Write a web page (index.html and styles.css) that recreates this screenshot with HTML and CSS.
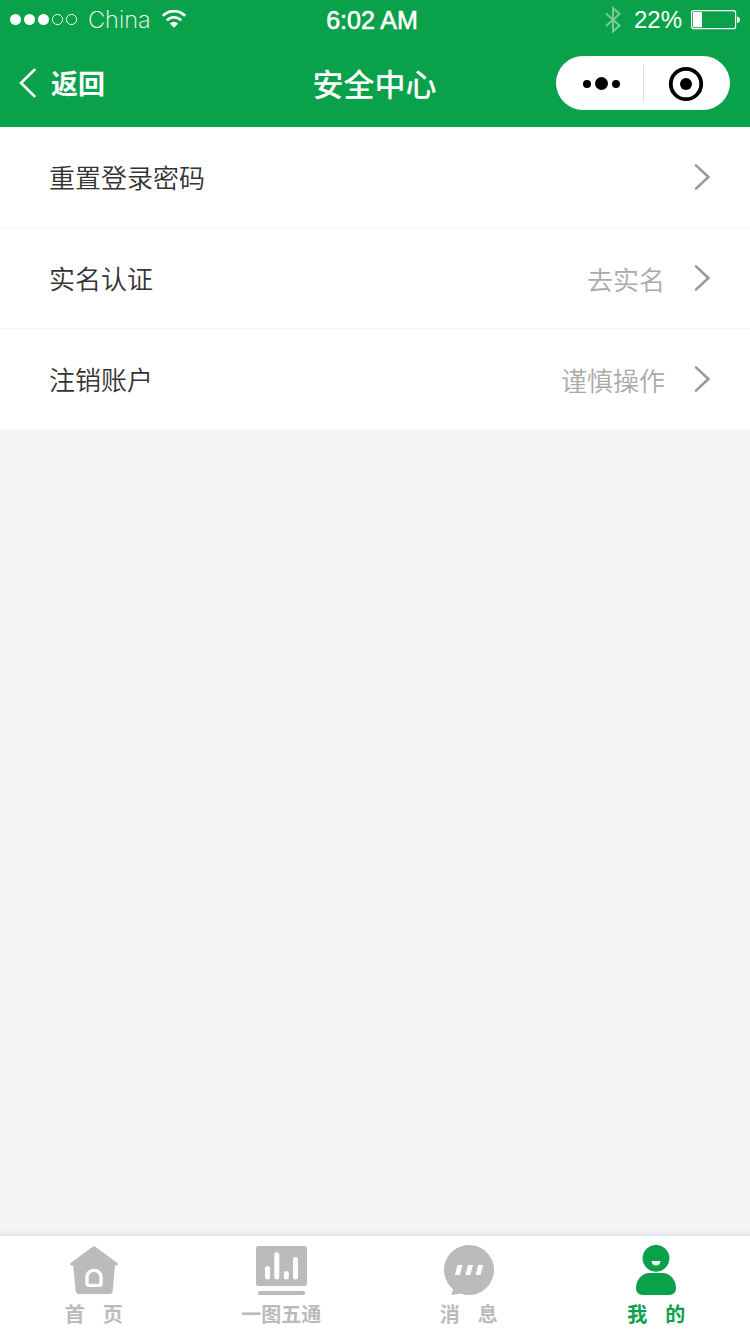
FILE: index.html
```html
<!DOCTYPE html>
<html lang="zh-CN">
<head>
    <meta charset="UTF-8">
    <meta name="viewport" content="width=device-width, initial-scale=1.0">
    <title>安全中心</title>
    <link rel="stylesheet" href="styles.css">
</head>
<body>
    <header class="header">
        <div class="status-bar">
            <div class="status-left">
                <svg class="signal" width="68" height="12" viewBox="0 0 68 12">
                    <g fill="#fff">
                        <circle cx="5.5" cy="5.5" r="5.5"/>
                        <circle cx="19.5" cy="5.5" r="5.5"/>
                        <circle cx="33.5" cy="5.5" r="5.5"/>
                    </g>
                    <g fill="none" stroke="#fff">
                        <circle cx="47.5" cy="5.5" r="5.1"/>
                        <circle cx="61.5" cy="5.5" r="5.1"/>
                    </g>
                </svg>
                <span class="carrier">China</span>
                <svg class="wifi" width="24" height="20" viewBox="0 0 24 20">
                    <g fill="none" stroke="#fff" stroke-width="2.6">
                        <path d="M.9 5.8C7 -.4 17 -.4 23.1 5.8"/>
                        <path d="M4.8 10.4C9 6.2 15 6.2 19.2 10.4"/>
                    </g>
                    <path d="M7.8 13.4C10 11.4 14 11.4 16.2 13.4L12 17.8z" fill="#fff"/>
                </svg>
            </div>
            <span class="time">6:02 AM</span>
            <div class="status-right">
                <svg class="bluetooth" width="16" height="28" viewBox="0 0 16 28">
                    <path d="M1 7.5L14.5 19.5L8 25.5V2L14.5 8L1 20" fill="none" stroke="#fff" stroke-width="2"/>
                </svg>
                <span class="percent">22%</span>
                <svg class="battery" width="50" height="20" viewBox="0 0 50 20">
                    <rect x=".6" y=".6" width="44" height="18" rx="2.2" fill="none" stroke="#fff" stroke-width="1.2"/>
                    <rect x="2" y="2" width="9" height="15.2" rx="1" fill="#fff"/>
                    <path d="M46 6.5C50 7.5 50 12 46 13z" fill="#fff"/>
                </svg>
            </div>
        </div>
        <div class="nav-bar">
            <a class="back">
                <svg width="18" height="30" viewBox="0 0 18 30">
                    <path d="M15.5 1.8L2 15L15.5 28.2" fill="none" stroke="#fff" stroke-width="2.6" stroke-linecap="round"/>
                </svg>
                <span>返回</span>
            </a>
            <h1 class="title">安全中心</h1>
            <div class="capsule">
                <svg width="174" height="54" viewBox="0 0 174 54">
                    <circle cx="31" cy="28" r="4"/>
                    <circle cx="45.5" cy="27.5" r="6.5"/>
                    <circle cx="60" cy="28" r="4"/>
                    <path d="M87.5 9V46" stroke="#dedede"/>
                    <circle cx="130" cy="28" r="15.2" fill="none" stroke="#000" stroke-width="3.8"/>
                    <circle cx="130" cy="28" r="6"/>
                </svg>
            </div>
        </div>
    </header>

    <main class="list">
        <div class="row">
            <span class="label">重置登录密码</span>
            <svg class="arrow" width="18" height="28" viewBox="0 0 18 28">
                <path d="M3 2.4L15.4 14L3 25.6" fill="none" stroke="#999" stroke-width="2.6" stroke-linecap="round"/>
            </svg>
        </div>
        <div class="row">
            <span class="label">实名认证</span>
            <span class="value">去实名</span>
            <svg class="arrow" width="18" height="28" viewBox="0 0 18 28">
                <path d="M3 2.4L15.4 14L3 25.6" fill="none" stroke="#999" stroke-width="2.6" stroke-linecap="round"/>
            </svg>
        </div>
        <div class="row">
            <span class="label">注销账户</span>
            <span class="value">谨慎操作</span>
            <svg class="arrow" width="18" height="28" viewBox="0 0 18 28">
                <path d="M3 2.4L15.4 14L3 25.6" fill="none" stroke="#999" stroke-width="2.6" stroke-linecap="round"/>
            </svg>
        </div>
    </main>

    <nav class="tab-bar">
        <a class="tab">
            <svg width="54" height="52" viewBox="0 0 54 52">
                <path d="M25.6 1.8Q27 .8 28.4 1.8L50.4 18Q52 20 49.5 20.6H48L45.7 46Q45.4 49 42.5 49H11.9Q9 49 8.7 46L6.2 20.6H4.5Q2 20 3.6 18z" fill="currentColor"/>
                <path d="M20 38.6V32A7 6.6 0 0 1 34 32V38.6Q34 40.4 32.2 40.4H21.8Q20 40.4 20 38.6z" fill="none" stroke="#fff" stroke-width="3.4"/>
            </svg>
            <span>首<i class="space"></i>页</span>
        </a>
        <a class="tab">
            <svg width="54" height="52" viewBox="0 0 54 52">
                <rect x="2" y="1" width="51" height="40" rx="2.5" fill="currentColor"/>
                <rect x="4" y="46" width="47" height="4" rx="1.5" fill="currentColor"/>
                <path d="M13.5 23.5V32M22.8 9.8V32M32.3 28.5V32M41.5 14.5V32" fill="none" stroke="#fff" stroke-width="5" stroke-linecap="round"/>
            </svg>
            <span>一图五通</span>
        </a>
        <a class="tab">
            <svg width="54" height="52" viewBox="0 0 54 52">
                <path d="M27 0A25 25 0 1 1 18.5 48.5L9.6 50L11 44.2A25 25 0 0 1 27 0z" fill="currentColor"/>
                <path d="M15.5 20H20.5L17.8 30H13zM26 20H31L28.3 30H23.5zM36.2 20H41.2L38.5 30H33.7z" fill="#fff"/>
            </svg>
            <span>消<i class="space"></i>息</span>
        </a>
        <a class="tab active">
            <svg width="54" height="52" viewBox="0 0 54 52">
                <circle cx="27" cy="13.3" r="13.4" fill="currentColor"/>
                <path d="M22.5 16H31.5Q30.8 20.5 27 20.5Q23.2 20.5 22.5 16z" fill="#fff"/>
                <path d="M20 28H34C41 28 47 35 47 43Q47 50 40 50H14Q7 50 7 43C7 35 13 28 20 28z" fill="currentColor"/>
            </svg>
            <span>我<i class="space"></i>的</span>
        </a>
    </nav>
</body>
</html>
```
FILE: styles.css
```css
* {
    box-sizing: border-box;
}

body {
    display: flex;
    flex-direction: column;
    height: 1334px;
    margin: 0;
    background-color: #f5f5f5;
    color: #333;
    font-family: "Noto Sans CJK SC", sans-serif;
}

svg {
    display: block;
    flex-shrink: 0;
}

.header {
    height: 127px;
    background-color: #0aa14b;
    color: #fff;
}

.status-bar,
.nav-bar {
    display: grid;
    grid-template-columns: 1fr auto 1fr;
    align-items: center;
}

.status-bar {
    height: 40px;
    padding: 0 10px;
    font-family: Inter, "Liberation Sans", sans-serif;
    font-size: 24px;
    line-height: 40px;
}

.status-left,
.status-right {
    display: flex;
    align-items: center;
}

.status-right {
    justify-content: flex-end;
}

.carrier {
    margin: 0 11px 0 10px;
    font-size: 23.6px;
    font-weight: 200;
}

.time {
    margin-right: 6px;
    font-family: "Liberation Sans", sans-serif;
    font-size: 25px;
    -webkit-text-stroke: 0.6px #fff;
}

.bluetooth {
    margin-right: 13px;
    opacity: 0.45;
}

.percent {
    margin-right: 9px;
    font-family: "Liberation Sans", sans-serif;
}

.battery {
    margin-right: -1px;
}

.nav-bar {
    height: 85px;
    padding: 0 20px 0 19px;
}

.back {
    display: flex;
    align-items: center;
    gap: 14px;
    font-size: 27px;
    font-weight: 700;
}

.title {
    margin: 0;
    font-size: 31px;
    font-weight: 500;
}

.capsule {
    justify-self: end;
    width: 174px;
    height: 54px;
    border-radius: 27px;
    background-color: #fff;
}

.row {
    display: flex;
    align-items: center;
    height: 101px;
    padding: 0 39px 0 49px;
    border-bottom: 1px solid #f4f4f4;
    background-color: #fff;
    font-size: 26px;
}

.label {
    flex: 1;
    padding-bottom: 2px;
    font-weight: 350;
}

.value {
    margin-right: 28px;
    color: #aaa;
    font-weight: 350;
}

.tab-bar {
    display: flex;
    height: 98px;
    margin-top: auto;
    background-color: #fff;
    box-shadow: 0 0 8px rgba(0, 0, 0, 0.16);
}

.tab {
    display: flex;
    flex: 1;
    flex-direction: column;
    align-items: center;
    padding-top: 9px;
    color: #bbb;
    font-size: 20px;
    font-weight: 700;
    line-height: 34px;
}

.active {
    color: #0aa14b;
}

.space {
    display: inline-block;
    width: 18px;
}
```
